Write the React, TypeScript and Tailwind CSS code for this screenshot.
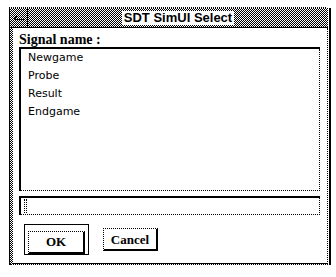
import React from "react";

const checker =
  "[background-image:repeating-conic-gradient(#000_0%_25%,#fff_0%_50%)] [background-size:2px_2px]";

const items = ["Newgame", "Probe", "Result", "Endgame"];

export default function App() {
  return (
    <div className="w-[336px] h-[277px] bg-white overflow-hidden">
      {/* window */}
      <div className="ml-[9px] pt-[7px] w-[322px] flex flex-col">
        {/* top edge */}
        <div className="h-px mr-[5px] border-t border-dotted border-black" />
        <div className="flex">
          {/* left frame */}
          <div className="w-px bg-black" />
          <div className="flex-1 flex flex-col">
            {/* title bar */}
            <div className="h-[20px] flex border-b border-black">
              <div className={`w-[18px] flex items-center justify-center border-r border-black ${checker}`}>
                <svg width="10" height="6" viewBox="0 0 10 6" className="mt-[3px]">
                  <path d="M0 3 H10 M0 3 L3 0 M0 3 L3 6" stroke="#000" strokeWidth="1" fill="none" shapeRendering="crispEdges" />
                </svg>
              </div>
              <div className={`flex-1 flex items-center justify-center ${checker}`}>
                <span className="bg-white px-[2px] leading-[14px] text-[13px] font-bold text-black [font-family:'Liberation_Sans',Arial,sans-serif]">
                  SDT SimUI Select
                </span>
              </div>
            </div>
            {/* body */}
            <div className="flex">
              <div className={`w-[3px] ${checker}`} />
              <div className="flex-1 flex flex-col pl-[6px] pr-[7px] pt-[4px] pb-[8px] border-b border-black">
                <div className="leading-[15px] text-[14px] font-bold text-black [font-family:'Liberation_Serif','Times_New_Roman',serif]">
                  Signal name :
                </div>
                {/* list */}
                <div className="h-[144px] border-t-2 border-l-2 border-black flex">
                  <div className="flex-1 flex flex-col border-r border-b border-dotted border-black pl-[7px]">
                    {items.map((s) => (
                      <div
                        key={s}
                        className="h-[18px] leading-[18px] text-[11px] text-black [font-family:'DejaVu_Sans',sans-serif]"
                      >
                        {s}
                      </div>
                    ))}
                  </div>
                </div>
                {/* text field */}
                <div className="mt-[5px] h-[19px] border-t-2 border-l-2 border-black flex">
                  <div className="flex-1 border-r border-b border-dotted border-black pl-[3px] py-[1px] flex">
                    <div className="w-[3px] h-full border border-dotted border-black" />
                  </div>
                </div>
                {/* buttons */}
                <div className="mt-[9px] flex items-start gap-[14px] pl-[5px]">
                  <div className="w-[65px] h-[31px] border border-black p-[3px]">
                    <button className="w-full h-full border-t border-l border-dotted border-black border-r-2 border-b-2 [border-right-style:solid] [border-bottom-style:solid] text-[13px] font-bold text-black [font-family:'Liberation_Serif','Times_New_Roman',serif] leading-none">
                      OK
                    </button>
                  </div>
                  <button className="mt-[4px] w-[55px] h-[23px] border-t border-l border-dotted border-black border-r-2 border-b-2 [border-right-style:solid] [border-bottom-style:solid] text-[13px] font-bold text-black [font-family:'Liberation_Serif','Times_New_Roman',serif] leading-none">
                    Cancel
                  </button>
                </div>
              </div>
              {/* inner right edge */}
              <div className="w-px border-l border-dotted border-black" />
            </div>
            <div className="h-px border-t border-dotted border-black" />
          </div>
          {/* right frame */}
          <div className="w-px" />
          <div className="w-[2px] bg-black" />
        </div>
      </div>
    </div>
  );
}
